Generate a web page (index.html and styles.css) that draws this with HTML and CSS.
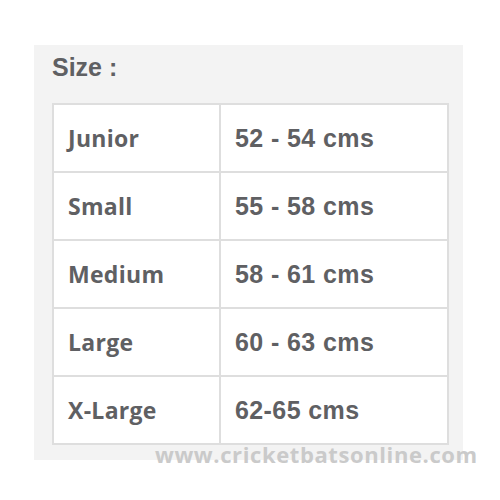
FILE: index.html
```html
<!DOCTYPE html>
<html>
<head>
<meta charset="utf-8">
<link rel="stylesheet" href="styles.css">
</head>
<body>
<div class="page">
  <div class="panel">
    <h2 class="title">Size :</h2>
    <table class="sizes">
      <tr><td class="name">Junior</td><td class="val">52 - 54 cms</td></tr>
      <tr><td class="name">Small</td><td class="val">55 - 58 cms</td></tr>
      <tr><td class="name">Medium</td><td class="val">58 - 61 cms</td></tr>
      <tr><td class="name">Large</td><td class="val">60 - 63 cms</td></tr>
      <tr><td class="name">X-Large</td><td class="val">62-65 cms</td></tr>
    </table>
  </div>
  <div class="watermark">www.cricketbatsonline.com</div>
</div>
</body>
</html>
```
FILE: styles.css
```css
html, body {
  margin: 0;
  padding: 0;
  background: #ffffff;
}
.page {
  position: relative;
  width: 500px;
  height: 500px;
  padding-top: 45px;
  padding-left: 34px;
  box-sizing: border-box;
}
.panel {
  width: 429px;
  height: 415px;
  box-sizing: border-box;
  background: #f3f3f3;
  padding: 0 14px 0 18px;
}
.title {
  margin: 0;
  height: 58px;
  padding-left: 0;
  padding-top: 8px;
  box-sizing: border-box;
  font-family: "Liberation Sans", Arial, sans-serif;
  font-weight: bold;
  font-size: 25px;
  color: #5f6063;
  line-height: 28px;
}
.sizes {
  border-collapse: collapse;
  width: 397px;
  background: #ffffff;
}
.sizes td {
  border: 2px solid #dedede;
  height: 68px;
  box-sizing: border-box;
  padding: 0 0 0 14px;
  color: #5f6063;
  vertical-align: middle;
}
.name {
  width: 167px;
  font-family: "Open Sans", sans-serif;
  font-weight: bold;
  font-size: 23px;
  letter-spacing: 0.3px;
}
.val {
  font-family: "Liberation Sans", Arial, sans-serif;
  font-weight: bold;
  font-size: 25px;
  letter-spacing: 0.4px;
}
.watermark {
  position: absolute;
  left: 155px;
  top: 439px;
  font-family: "Open Sans", sans-serif;
  font-weight: bold;
  font-size: 22px;
  color: #cacaca;
  letter-spacing: 0.6px;
}
```
